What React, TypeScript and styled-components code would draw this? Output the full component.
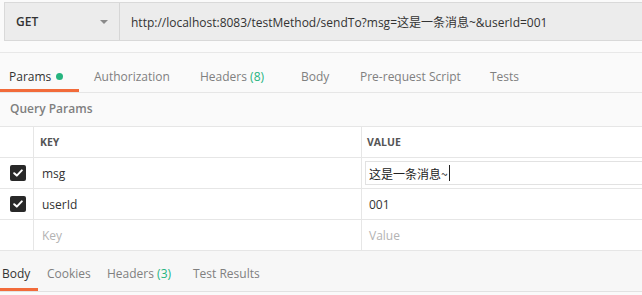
import { FC } from 'react';
import styled, { createGlobalStyle } from 'styled-components';

const GlobalStyle = createGlobalStyle`
  html, body {
    margin: 0;
    padding: 0;
    background: #fafafa;
  }
  body {
    font-family: 'Open Sans', 'Noto Sans CJK SC', sans-serif;
    font-size: 12px;
    color: #333333;
  }
`;

interface TabItem {
  label: string;
  count?: string;
  dot?: boolean;
  active?: boolean;
  width: number;
  pad: number;
}

const requestTabs: TabItem[] = [
  { label: 'Params', dot: true, active: true, width: 79, pad: 9 },
  { label: 'Authorization', width: 106, pad: 15 },
  { label: 'Headers', count: '(8)', width: 101, pad: 15 },
  { label: 'Body', width: 59, pad: 15 },
  { label: 'Pre-request Script', width: 130, pad: 15 },
  { label: 'Tests', width: 60, pad: 15 },
];

const responseTabs: TabItem[] = [
  { label: 'Body', active: true, width: 38, pad: 2 },
  { label: 'Cookies', width: 60, pad: 9 },
  { label: 'Headers', count: '(3)', width: 86, pad: 9 },
  { label: 'Test Results', width: 100, pad: 9 },
];

const rows = [
  { key: 'msg', value: '这是一条消息~', editing: true },
  { key: 'userId', value: '001' },
];

const CheckIcon: FC = () => (
  <svg width="10" height="8" viewBox="0 0 10 8">
    <path
      d="M1.2 4.2 L3.8 6.6 L8.8 1.4"
      fill="none"
      stroke="#ffffff"
      strokeWidth="2"
      strokeLinecap="round"
      strokeLinejoin="round"
    />
  </svg>
);

const App: FC = () => {
  return (
    <>
      <GlobalStyle />
      <Page>
        <UrlBar>
          <MethodSelect>
            <span>GET</span>
            <Caret />
          </MethodSelect>
          <UrlField>
            http://localhost:8083/testMethod/sendTo?msg=这是一条消息~&amp;userId=001
          </UrlField>
        </UrlBar>
        <Spacer />
        <TabBar>
          {requestTabs.map((tab) => (
            <Tab key={tab.label} active={tab.active} width={tab.width} pad={tab.pad} lift={7}>
              {tab.label}
              {tab.count && <Count>&nbsp;{tab.count}</Count>}
              {tab.dot && <Dot />}
            </Tab>
          ))}
        </TabBar>
        <SectionTitle>Query Params</SectionTitle>
        <Table>
          <Row>
            <CheckCell />
            <KeyCell>
              <HeaderLabel>KEY</HeaderLabel>
            </KeyCell>
            <ValueCell>
              <HeaderLabel>VALUE</HeaderLabel>
            </ValueCell>
          </Row>
          {rows.map((row) => (
            <Row key={row.key}>
              <CheckCell>
                <Checkbox>
                  <CheckIcon />
                </Checkbox>
              </CheckCell>
              <KeyCell>
                <CellText>{row.key}</CellText>
              </KeyCell>
              <ValueCell>
                {row.editing ? (
                  <EditBox>
                    {row.value}
                    <Cursor />
                  </EditBox>
                ) : (
                  <CellText>{row.value}</CellText>
                )}
              </ValueCell>
            </Row>
          ))}
          <Row>
            <CheckCell />
            <KeyCell>
              <Placeholder>Key</Placeholder>
            </KeyCell>
            <ValueCell>
              <Placeholder>Value</Placeholder>
            </ValueCell>
          </Row>
        </Table>
        <ResponseTabBar>
          {responseTabs.map((tab) => (
            <Tab key={tab.label} active={tab.active} width={tab.width} pad={tab.pad} lift={4}>
              {tab.label}
              {tab.count && <Count>&nbsp;{tab.count}</Count>}
            </Tab>
          ))}
        </ResponseTabBar>
      </Page>
    </>
  );
};

const Page = styled.div`
  width: 642px;
  height: 295px;
  overflow: hidden;
  background: #fafafa;
`;

const UrlBar = styled.div`
  display: flex;
  height: 37px;
  margin: 2px 0 0 4px;
  border: 1px solid #d9d9d9;
  border-right: none;
  background: #ececec;
`;

const MethodSelect = styled.div`
  display: flex;
  align-items: center;
  justify-content: space-between;
  width: 115px;
  padding: 0 11px 0 11px;
  box-sizing: border-box;
  border-right: 1px solid #d6d6d6;
  font-weight: 600;
  font-size: 12px;
  color: #333333;
`;

const Caret = styled.span`
  width: 0;
  height: 0;
  border-left: 4px solid transparent;
  border-right: 4px solid transparent;
  border-top: 4px solid #8a8a8a;
`;

const UrlField = styled.div`
  display: flex;
  align-items: center;
  padding-left: 11px;
  font-size: 12px;
  color: #333333;
  white-space: nowrap;
`;

const Spacer = styled.div`
  height: 11px;
  border-bottom: 1px solid #e8e8e8;
  background: #fbfbfb;
`;

const TabBar = styled.div`
  display: flex;
  height: 39px;
  border-bottom: 1px solid #e6e6e6;
  background: #fafafa;
`;

const ResponseTabBar = styled(TabBar)`
  height: 40px;
  background: #f7f7f7;
  border-top: 1px solid #e6e6e6;
  border-bottom: 1px solid #e2e2e2;
`;

const Tab = styled.div<{ active?: boolean; width: number; pad: number; lift: number }>`
  display: flex;
  align-items: center;
  width: ${({ width }) => width}px;
  flex-shrink: 0;
  padding-left: ${({ pad }) => pad}px;
  padding-top: ${({ lift }) => lift}px;
  box-sizing: border-box;
  font-size: 12px;
  color: ${({ active }) => (active ? '#333333' : '#808080')};
  white-space: nowrap;
  box-shadow: ${({ active }) => (active ? 'inset 0 -3px 0 #f26b3a' : 'none')};
`;

const Count = styled.span`
  color: #26b47f;
`;

const Dot = styled.span`
  width: 7px;
  height: 7px;
  margin-left: 5px;
  border-radius: 50%;
  background: #26b47f;
`;

const SectionTitle = styled.div`
  display: flex;
  align-items: center;
  height: 31px;
  padding: 0 0 2px 10px;
  font-size: 12px;
  font-weight: 600;
  color: #7f7f7f;
`;

const Table = styled.div`
  border-top: 1px solid #e6e6e6;
  background: #ffffff;
`;

const Row = styled.div`
  display: grid;
  grid-template-columns: 34px 328px 1fr;
  height: 30px;
  border-bottom: 1px solid #e6e6e6;

  &:last-child {
    border-bottom: none;
  }
`;

const CheckCell = styled.div`
  display: flex;
  align-items: center;
  justify-content: center;
  padding-left: 2px;
  border-right: 1px solid #e6e6e6;
`;

const KeyCell = styled.div`
  display: flex;
  align-items: center;
  padding-left: 8px;
  border-right: 1px solid #e6e6e6;
`;

const ValueCell = styled.div`
  display: flex;
  align-items: center;
  padding-left: 7px;
`;

const HeaderLabel = styled.span`
  font-size: 10.5px;
  font-weight: 700;
  color: #555555;
  margin-left: -2px;
`;

const CellText = styled.span`
  font-size: 12px;
  color: #333333;
`;

const Placeholder = styled.span`
  font-size: 12px;
  color: #b3b3b3;
`;

const Checkbox = styled.span`
  display: flex;
  align-items: center;
  justify-content: center;
  width: 16px;
  height: 16px;
  border-radius: 2px;
  background: #282828;
`;

const EditBox = styled.div`
  display: flex;
  align-items: center;
  height: 22px;
  flex: 1;
  margin-left: -4px;
  padding-left: 3px;
  border: 1px solid #e2e2e2;
  border-right: none;
  font-family: 'Noto Sans CJK SC', 'Open Sans', sans-serif;
  font-size: 12px;
  color: #222222;
`;

const Cursor = styled.span`
  width: 1px;
  height: 16px;
  margin-left: 1px;
  background: #222222;
`;

export default App;
